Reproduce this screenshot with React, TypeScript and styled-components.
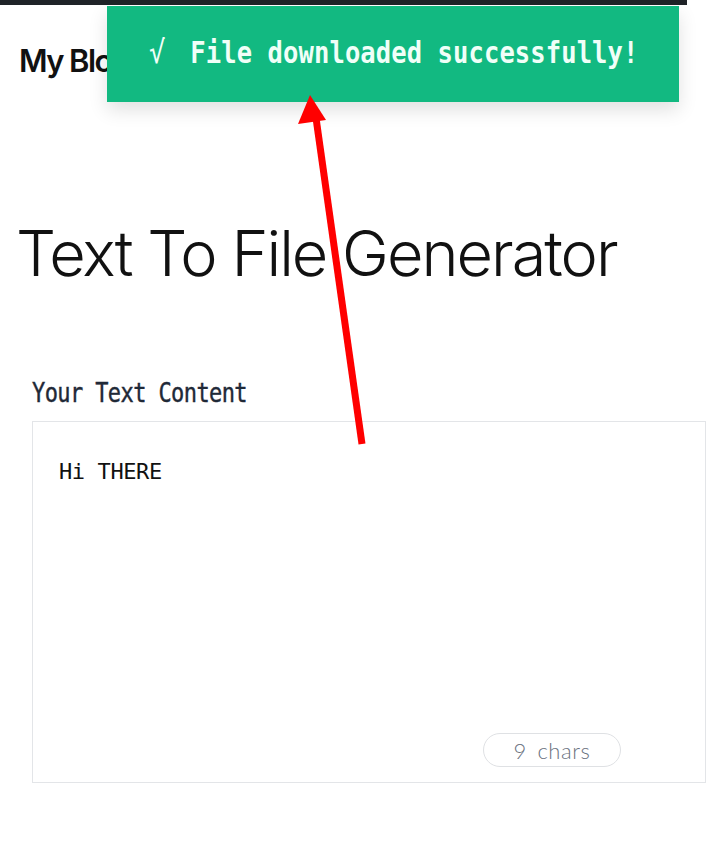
import React from 'react';
import styled, { createGlobalStyle } from 'styled-components';

const GlobalStyle = createGlobalStyle`
  html, body {
    margin: 0;
    padding: 0;
    background: #ffffff;
  }
  body {
    font-family: Inter, "Noto Sans", sans-serif;
    color: #111111;
  }
`;

const Page = styled.div`
  position: relative;
  width: 720px;
  min-height: 852px;
  overflow: hidden;
`;

const TopStrip = styled.div`
  height: 5px;
  width: 687px;
  background: #1f2328;
`;

const Header = styled.header`
  height: 110px;
  display: flex;
  align-items: flex-start;
  padding: 37px 19px 0;
  box-sizing: border-box;
`;

const Brand = styled.div`
  font-size: 31px;
  line-height: 38px;
  font-weight: 600;
  letter-spacing: -1.6px;
  color: #111;
`;

const Main = styled.main`
  padding: 100px 19px 0 19px;
`;

const Title = styled.h1`
  margin: 0 0 0 -3px;
  font-size: 63px;
  font-weight: 300;
  line-height: 76px;
  letter-spacing: -2px;
  color: #111;
`;

const Field = styled.section`
  margin-top: 88px;
  padding-left: 13px;
`;

// the mono face in the shot is narrow and tall, so stretch DejaVu a little
const Tall = styled.span<{ $scale: number }>`
  display: inline-block;
  transform: scaleY(${({ $scale }) => $scale});
  transform-origin: center;
`;

const Label = styled.label`
  display: block;
  height: 28px;
  font-family: "DejaVu Sans Mono", monospace;
  font-size: 22px;
  letter-spacing: -0.6px;
  -webkit-text-stroke: 0.35px #1f2937;
  color: #1f2937;
  line-height: 28px;
  margin-bottom: 14px;
`;

const EditorBox = styled.div`
  position: relative;
  width: 674px;
  height: 362px;
  border: 1px solid #e3e5e8;
  box-sizing: border-box;
`;

const Area = styled.textarea`
  display: block;
  width: 100%;
  height: 100%;
  box-sizing: border-box;
  border: none;
  outline: none;
  resize: none;
  padding: 35px 26px;
  font-family: "DejaVu Sans Mono", monospace;
  font-size: 22px;
  letter-spacing: -0.4px;
  line-height: 30px;
  color: #111;
  background: transparent;
`;

const CharCount = styled.span`
  position: absolute;
  right: 84px;
  bottom: 15px;
  height: 34px;
  width: 138px;
  box-sizing: border-box;
  border: 1px solid #dfe1e4;
  border-radius: 999px;
  display: flex;
  align-items: center;
  justify-content: center;
  font-family: Lato, "Noto Sans", sans-serif;
  font-weight: 300;
  font-size: 22px;
  letter-spacing: 0.6px;
  color: #6b7280;
  word-spacing: 4px;
`;

const Toast = styled.div`
  position: absolute;
  top: 6px;
  left: 107px;
  width: 572px;
  height: 96px;
  background: #12b981;
  box-shadow: 0 8px 18px rgba(0, 0, 0, 0.12);
  display: flex;
  align-items: center;
  padding: 0 0 4px 42px;
  box-sizing: border-box;
  color: #f0fff8;
  font-family: "DejaVu Sans Mono", monospace;
  font-weight: 700;
  font-size: 25.5px;
  letter-spacing: 0.1px;
`;

const Check = styled.span`
  font-weight: 400;
  font-size: 27px;
  margin-right: 25px;
`;

const Annotation = styled.svg`
  position: absolute;
  left: 0;
  top: 0;
  pointer-events: none;
`;

export default function App() {
  return (
    <Page>
      <GlobalStyle />
      <TopStrip />
      <Header>
        <Brand>My Blog</Brand>
      </Header>
      <Main>
        <Title>Text To File Generator</Title>
        <Field>
          <Label htmlFor="content">
            <Tall $scale={1.22}>Your Text Content</Tall>
          </Label>
          <EditorBox>
            <Area id="content" defaultValue="Hi THERE" />
            <CharCount>9 chars</CharCount>
          </EditorBox>
        </Field>
      </Main>
      <Toast>
        <Check>
          <Tall $scale={1.15}>√</Tall>
        </Check>
        <Tall $scale={1.2}>File downloaded successfully!</Tall>
      </Toast>
      <Annotation width="720" height="852" viewBox="0 0 720 852">
        <line x1="362" y1="444" x2="316" y2="118" stroke="#ff0000" strokeWidth="7" />
        <polygon points="310,95 298,124 326,120" fill="#ff0000" />
      </Annotation>
    </Page>
  );
}
